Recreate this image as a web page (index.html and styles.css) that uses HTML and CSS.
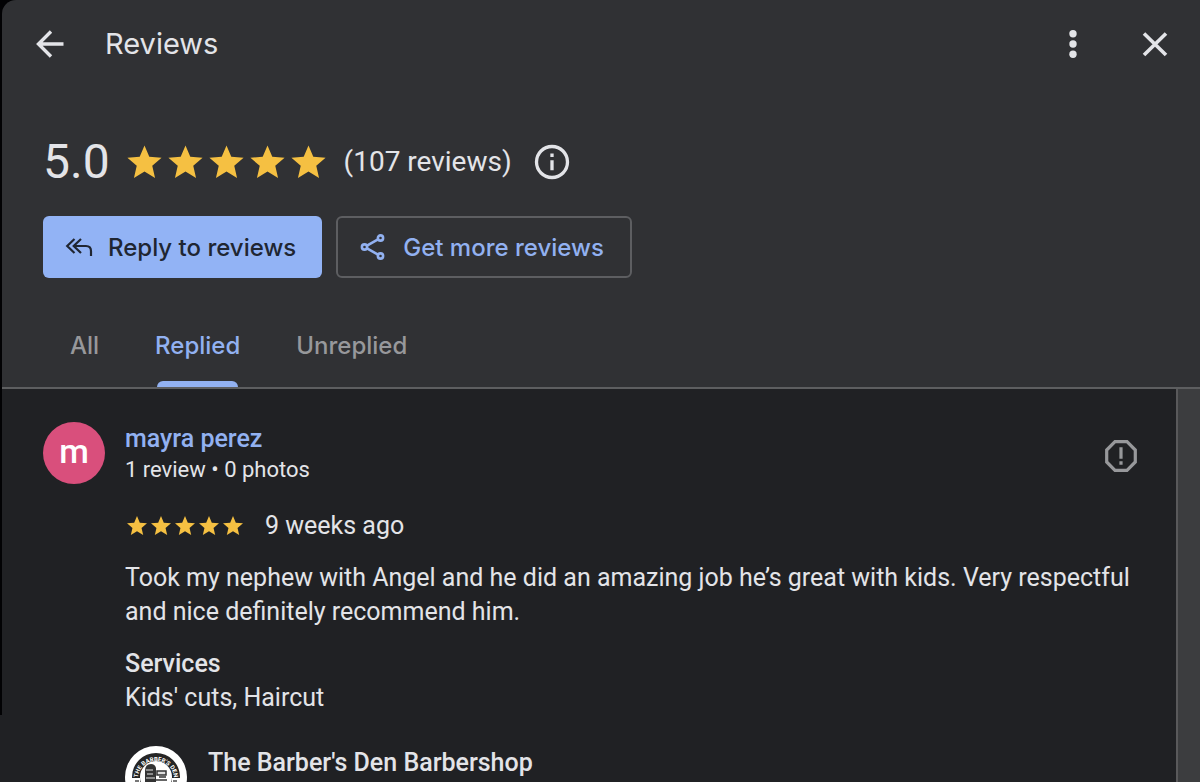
FILE: index.html
```html
<!DOCTYPE html>
<html lang="en">
<head>
    <meta charset="UTF-8">
    <meta name="viewport" content="width=device-width, initial-scale=1.0">
    <title>Reviews</title>
    <link rel="stylesheet" href="styles.css">
</head>
<body>
    <svg width="0" height="0" class="sprite" aria-hidden="true">
        <symbol id="star" viewBox="0 0 24 24">
            <path d="M12 17.27 18.18 21l-1.64-7.03L22 9.24l-7.19-.61L12 2 9.19 8.63 2 9.24l5.46 4.73L5.82 21z"/>
        </symbol>
    </svg>

    <main class="dialog">
        <header class="top-bar">
            <button class="icon-btn" aria-label="Back">
                <svg width="40" height="40" viewBox="0 0 40 40" fill="none" stroke="currentColor" stroke-width="3.400">
                    <path d="M33.500 20H9M21 7.500 8.500 20 21 32.500"/>
                </svg>
            </button>
            <h1>Reviews</h1>
            <button class="icon-btn" aria-label="More options">
                <svg width="40" height="40" viewBox="0 0 40 40" fill="currentColor">
                    <circle cx="20" cy="9.700" r="3.700"/>
                    <circle cx="20" cy="20" r="3.700"/>
                    <circle cx="20" cy="30.300" r="3.700"/>
                </svg>
            </button>
            <button class="icon-btn" aria-label="Close">
                <svg width="40" height="40" viewBox="0 0 40 40" fill="none" stroke="currentColor" stroke-width="3.600">
                    <path d="M9 9.500 31 31M31 9.500 9 31"/>
                </svg>
            </button>
        </header>

        <section class="summary">
            <div class="rating">
                <span class="score">5.0</span>
                <span class="stars large" role="img" aria-label="5 stars">
                    <svg><use href="#star"/></svg>
                    <svg><use href="#star"/></svg>
                    <svg><use href="#star"/></svg>
                    <svg><use href="#star"/></svg>
                    <svg><use href="#star"/></svg>
                </span>
                <span class="count">(107 reviews)</span>
                <button class="icon-btn" aria-label="About ratings">
                    <svg width="40" height="40" viewBox="0 0 40 40" fill="none" stroke="currentColor" stroke-width="3.300">
                        <circle cx="20" cy="20" r="15.500"/>
                        <path d="M20 18.300v10M20 11.600v3.400"/>
                    </svg>
                </button>
            </div>

            <div class="actions">
                <button class="btn primary">
                    <svg width="28" height="28" viewBox="0 0 28 28" fill="none" stroke="currentColor" stroke-width="2.200">
                        <path d="M9.500 6 2.200 13l7.300 7M16 6l-7.300 7 7.300 7M9 13h12q5 0 5 5v5"/>
                    </svg>
                    Reply to reviews
                </button>
                <button class="btn outlined">
                    <svg width="28" height="28" viewBox="0 0 28 28" fill="none" stroke="currentColor" stroke-width="2.600">
                        <circle cx="4.500" cy="14" r="2.600"/>
                        <circle cx="20.500" cy="5" r="2.600"/>
                        <circle cx="20.500" cy="23" r="2.600"/>
                        <path d="m7 12.600 11-6.200M7 15.400l11 6.200"/>
                    </svg>
                    Get more reviews
                </button>
            </div>
        </section>

        <nav class="tabs">
            <button class="tab">All</button>
            <button class="tab active">Replied</button>
            <button class="tab">Unreplied</button>
        </nav>

        <div class="scroll-area">
            <div class="list">
                <article class="review">
                    <div class="avatar">m</div>
                    <div class="review-body">
                        <div class="author-row">
                            <div class="author-info">
                                <a class="author" href="#">mayra perez</a>
                                <p class="meta">1 review • 0 photos</p>
                            </div>
                            <button class="icon-btn report" aria-label="Report review">
                                <svg width="40" height="40" viewBox="0 0 40 40" fill="none" stroke="currentColor" stroke-width="3.200">
                                    <path d="M14 5.700h12L34.300 14v12L26 34.300H14L5.700 26V14z"/>
                                    <path d="M20 11.300v11.500M20 25.300v3.400"/>
                                </svg>
                            </button>
                        </div>
                        <div class="date-row">
                            <span class="stars small" role="img" aria-label="5 stars">
                                <svg><use href="#star"/></svg>
                                <svg><use href="#star"/></svg>
                                <svg><use href="#star"/></svg>
                                <svg><use href="#star"/></svg>
                                <svg><use href="#star"/></svg>
                            </span>
                            <span>9 weeks ago</span>
                        </div>
                        <p class="text">Took my nephew with Angel and he did an amazing job he’s great with kids. Very respectful and nice definitely recommend him.</p>
                        <h2>Services</h2>
                        <p>Kids' cuts, Haircut</p>
                        <div class="reply">
                            <svg class="logo" width="62" height="62" viewBox="0 0 62 62">
                                <circle cx="31" cy="31" r="31" fill="#fff"/>
                                <circle cx="31" cy="31" r="24" fill="#252525"/>
                                <circle cx="31" cy="31" r="16" fill="#fff"/>
                                <path id="arc" d="M13 36A18.200 18.200 0 1 1 49 36" fill="none"/>
                                <text class="logo-text"><textPath href="#arc" startOffset="50%" text-anchor="middle">THE BARBER'S DEN</textPath></text>
                                <path d="M6 32h9v14H6zM47 32h9v14h-9z" fill="#fff"/>
                                <path d="M10 35h4M48 35h4" stroke="#777" stroke-width="2"/>
                                <path d="M20 25q0-7 6-7 4 0 5 4v14H20z" fill="#333"/>
                                <path d="M21 24h7M22 28h6M21 32h9" stroke="#aaa" stroke-width="1.500"/>
                                <path d="M32 25h9v4h-9zM34 31h7M31 34h11" fill="#ddd" stroke="#333" stroke-width="1.500"/>
                            </svg>
                            <h2>The Barber's Den Barbershop</h2>
                        </div>
                    </div>
                </article>
            </div>
            <div class="gutter"></div>
        </div>
    </main>
</body>
</html>
```
FILE: styles.css
```css
*, *::before, *::after {
    box-sizing: border-box;
}

body {
    margin: 0;
    height: 100vh;
    overflow: hidden;
    background: #202124;
    color: #e3e4e8;
    font-family: Roboto, sans-serif;
    font-size: 25px;
    line-height: 34px;
}

/* dark page edge showing behind the dialog */
body::before {
    content: "";
    position: absolute;
    z-index: -1;
    top: 0;
    left: 0;
    width: 16px;
    height: 715px;
    background: #020204;
}

h1, h2, p {
    margin: 0;
}

button {
    border: none;
    background: none;
    color: inherit;
    font-family: inherit;
    cursor: pointer;
}

.sprite {
    position: absolute;
}

.dialog {
    display: flex;
    flex-direction: column;
    height: 100%;
    margin-left: 2px;
    border-top-left-radius: 14px;
    background: #303134;
    overflow: hidden;
}

.top-bar {
    display: flex;
    align-items: center;
    height: 88px;
    padding: 0 25px 0 28px;
}

.top-bar h1 {
    flex: 1;
    margin-left: 35px;
    font-family: Inter, sans-serif;
    font-size: 29px;
    font-weight: 400;
}

.top-bar .icon-btn + .icon-btn {
    margin-left: 42px;
}

.icon-btn {
    display: flex;
    padding: 0;
}

.summary {
    padding: 45px 41px 26px;
}

.rating {
    display: flex;
    align-items: center;
    height: 58px;
}

.score {
    font-size: 48px;
    line-height: 56px;
}

.stars {
    display: flex;
    fill: #f5c042;
}

.stars.large {
    margin-left: 14px;
}

.large svg {
    width: 41px;
    height: 41px;
}

.count {
    margin: 0 20px 0 15px;
    font-size: 28px;
}

.actions {
    display: flex;
    gap: 14px;
    margin-top: 25px;
}

.btn {
    display: flex;
    align-items: center;
    gap: 15px;
    height: 62px;
    padding: 0 26px 0 22px;
    border-radius: 6px;
    font-family: Inter, sans-serif;
    font-size: 24px;
    font-weight: 500;
}

.primary {
    background: #92b3f5;
    color: #202632;
}

.outlined {
    border: 2px solid #5d5e61;
    color: #92b1f1;
}

.tabs {
    display: flex;
    gap: 56px;
    height: 85px;
    padding-left: 68px;
    border-bottom: 2px solid #5d5e60;
}

.tab {
    position: relative;
    padding: 0;
    color: #97989b;
    font-family: Inter, sans-serif;
    font-size: 24px;
    font-weight: 500;
}

.tab.active {
    color: #92b1f1;
}

.tab.active::after {
    content: "";
    position: absolute;
    right: 2px;
    bottom: 0;
    left: 2px;
    height: 6px;
    border-radius: 6px 6px 0 0;
    background: #92b1f1;
}

.scroll-area {
    flex: 1;
    display: flex;
    min-height: 0;
    background: #202124;
}

.list {
    flex: 1;
    overflow: hidden;
}

.gutter {
    width: 24px;
    border-left: 2px solid #59595b;
    background: #3c3d3f;
}

.review {
    display: flex;
    gap: 20px;
    padding: 33px 35px 0 41px;
}

.avatar {
    flex: none;
    width: 62px;
    height: 62px;
    border-radius: 50%;
    background: #d94f7c;
    color: #fff;
    font-size: 34px;
    font-weight: 500;
    line-height: 58px;
    text-align: center;
}

.review-body {
    flex: 1;
}

.author-row {
    display: flex;
    align-items: center;
    justify-content: space-between;
    height: 68px;
}

.author-info {
    padding-bottom: 4px;
    line-height: 31px;
}

.author {
    color: #92b1f1;
    font-weight: 500;
    text-decoration: none;
}

.meta {
    font-size: 22px;
}

.report {
    color: #97989b;
}

.date-row {
    display: flex;
    align-items: center;
    gap: 20px;
    margin-top: 19px;
}

.small svg {
    width: 24px;
    height: 24px;
}

.text {
    margin: 18px 0;
}

h2 {
    font-size: 25px;
    font-weight: 500;
}

.reply {
    display: flex;
    gap: 21px;
    margin-top: 31px;
}

.logo-text {
    fill: #fff;
    font-size: 6px;
    font-weight: 700;
}
```
